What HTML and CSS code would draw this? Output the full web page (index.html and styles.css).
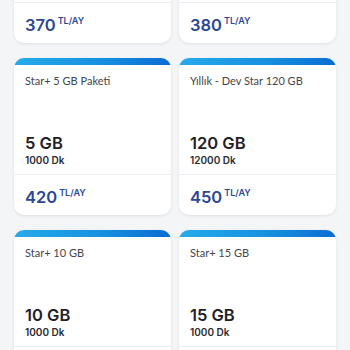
FILE: index.html
```html
<!DOCTYPE html>
<html lang="tr">
<head>
<meta charset="utf-8">
<link rel="stylesheet" href="styles.css">
</head>
<body>
<div class="grid">
  <div class="card">
    <div class="bar"></div>
    <div class="body">
      <div class="title">Star+ 3 GB</div>
      <div class="amount">
        <div class="gb">3 GB</div>
        <div class="dk">1000 Dk</div>
      </div>
    </div>
    <div class="foot"><span class="price">370</span><span class="unit">TL/AY</span></div>
  </div>
  <div class="card">
    <div class="bar"></div>
    <div class="body">
      <div class="title">Star+ 4 GB</div>
      <div class="amount">
        <div class="gb">4 GB</div>
        <div class="dk">1000 Dk</div>
      </div>
    </div>
    <div class="foot"><span class="price">380</span><span class="unit">TL/AY</span></div>
  </div>
  <div class="card">
    <div class="bar"></div>
    <div class="body">
      <div class="title">Star+ 5 GB Paketi</div>
      <div class="amount">
        <div class="gb">5 GB</div>
        <div class="dk">1000 Dk</div>
      </div>
    </div>
    <div class="foot"><span class="price">420</span><span class="unit">TL/AY</span></div>
  </div>
  <div class="card">
    <div class="bar"></div>
    <div class="body">
      <div class="title">Yıllık - Dev Star 120 GB</div>
      <div class="amount">
        <div class="gb">120 GB</div>
        <div class="dk">12000 Dk</div>
      </div>
    </div>
    <div class="foot"><span class="price">450</span><span class="unit">TL/AY</span></div>
  </div>
  <div class="card">
    <div class="bar"></div>
    <div class="body">
      <div class="title">Star+ 10 GB</div>
      <div class="amount">
        <div class="gb">10 GB</div>
        <div class="dk">1000 Dk</div>
      </div>
    </div>
    <div class="foot"><span class="price">470</span><span class="unit">TL/AY</span></div>
  </div>
  <div class="card">
    <div class="bar"></div>
    <div class="body">
      <div class="title">Star+ 15 GB</div>
      <div class="amount">
        <div class="gb">15 GB</div>
        <div class="dk">1000 Dk</div>
      </div>
    </div>
    <div class="foot"><span class="price">520</span><span class="unit">TL/AY</span></div>
  </div>
</div>
</body>
</html>
```
FILE: styles.css
```css
html, body {
  margin: 0;
  padding: 0;
  background: #f4f5f7;
  font-family: "Lato", "Noto Sans", sans-serif;
  overflow: hidden;
}
.grid {
  display: grid;
  grid-template-columns: 157px 157px;
  column-gap: 8px;
  row-gap: 15px;
  padding: 0 14px;
  margin-top: -114px;
}
.card {
  background: #fff;
  border-radius: 10px;
  height: 157px;
  display: flex;
  flex-direction: column;
  overflow: hidden;
  box-shadow: 0 1px 3px rgba(30, 40, 60, 0.10);
}
.bar {
  height: 7px;
  flex: none;
  background: linear-gradient(90deg, #27aaea 0%, #1591e0 55%, #0b6cd2 100%);
}
.body {
  flex: 1;
  display: flex;
  flex-direction: column;
  padding: 9px 11px 7px;
}
.title {
  font-size: 11px;
  line-height: 14px;
  color: #44464b;
}
.amount {
  margin-top: auto;
}
.gb {
  font-family: "Inter", "Lato", sans-serif;
  font-size: 16.5px;
  line-height: 20px;
  font-weight: 600;
  color: #1f2126;
}
.dk {
  font-family: "Inter", "Lato", sans-serif;
  font-size: 10px;
  line-height: 14px;
  font-weight: 600;
  color: #2a2c31;
}
.foot {
  height: 41px;
  flex: none;
  box-sizing: border-box;
  border-top: 1px solid #eceef1;
  display: flex;
  align-items: flex-start;
  padding: 12px 11px 0;
}
.price {
  font-family: "Inter", "Lato", sans-serif;
  font-size: 16.5px;
  line-height: 20px;
  font-weight: 600;
  color: #2c4796;
}
.unit {
  font-family: "Inter", "Lato", sans-serif;
  font-size: 9px;
  line-height: 10px;
  font-weight: 600;
  color: #2c4796;
  margin-left: 2px;
  margin-top: 1px;
}
```
